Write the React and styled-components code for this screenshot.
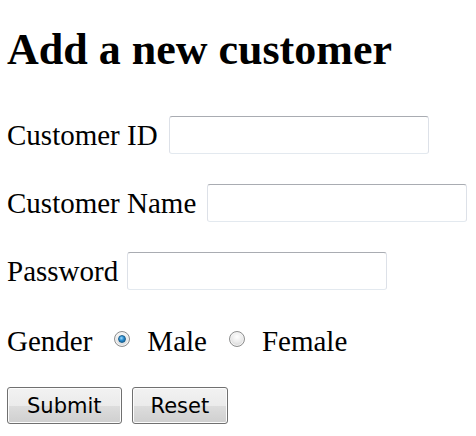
import styled, { createGlobalStyle } from "styled-components";

const GlobalStyle = createGlobalStyle`
    html, body {
        margin: 0;
        padding: 0;
        background: #ffffff;
    }
`;

const Page = styled.div`
    padding: 25px 7px 0 7px;
    font-family: "Liberation Serif", "Times New Roman", serif;
    color: #000000;
`;

const Title = styled.h2`
    margin: 0;
    font-size: 44px;
    line-height: 50px;
    font-weight: 700;
`;

const Form = styled.form`
    display: flex;
    flex-direction: column;
    gap: 30px;
    margin-top: 41px;
`;

const Row = styled.div`
    display: flex;
    align-items: center;
    height: 38px;
    margin-top: ${(p) => p.$shift ?? 0}px;
`;

const Label = styled.label`
    font-size: 29px;
    line-height: 38px;
    margin-right: ${(p) => p.$gap ?? 10}px;
    white-space: nowrap;
`;

const TextInput = styled.input`
    box-sizing: border-box;
    width: 260px;
    height: 38px;
    margin: 0;
    padding: 2px 4px;
    border: 1px solid;
    border-color: #a9acb2 #dde1e8 #e3e9ef #dde1e8;
    border-radius: 3px;
    background: #ffffff;
    font-size: 20px;
    outline: none;
`;

const RadioBox = styled.span`
    box-sizing: border-box;
    display: flex;
    align-items: center;
    justify-content: center;
    width: 16px;
    height: 16px;
    margin: -5px 17px 0 22px;
    border-radius: 50%;
    border: 1px solid #8e8f8f;
    background: radial-gradient(circle at 50% 35%, #ffffff 0%, #ececec 45%, #c9c9c9 100%);
    box-shadow: inset 0 0 0 1px #f4f4f4;
`;

const RadioDot = styled.span`
    width: 8px;
    height: 8px;
    border-radius: 50%;
    background: radial-gradient(circle at 40% 35%, #9fdcff 0%, #2a8ccf 45%, #0b5a8f 100%);
    border: 1px solid #1c5f8c;
    box-sizing: border-box;
`;

const Buttons = styled.div`
    display: flex;
    gap: 10px;
    margin-top: -3px;
`;

const Button = styled.button`
    box-sizing: border-box;
    height: 37px;
    margin: 0;
    padding: 0 ${(p) => p.$pad ?? 19}px;
    border: 1px solid #707070;
    border-radius: 3px;
    background: linear-gradient(
        to bottom,
        #f2f2f2 0%,
        #ebebeb 50%,
        #dddddd 51%,
        #cfcfcf 100%
    );
    box-shadow: inset 0 0 0 1px #fcfcfc;
    font-family: "DejaVu Sans", Verdana, sans-serif;
    font-size: 21px;
    color: #000000;
    cursor: pointer;
`;

const Radio = ({ checked }) => (
    <RadioBox>{checked && <RadioDot />}</RadioBox>
);

export default function App() {
    return (
        <>
            <GlobalStyle />
            <Page>
                <Title>Add a new customer</Title>
                <Form onSubmit={(e) => e.preventDefault()}>
                    <Row>
                        <Label $gap={11}>Customer ID</Label>
                        <TextInput type="text" />
                    </Row>
                    <Row>
                        <Label $gap={11}>Customer Name</Label>
                        <TextInput type="text" />
                    </Row>
                    <Row>
                        <Label $gap={9}>Password</Label>
                        <TextInput type="password" />
                    </Row>
                    <Row $shift={2}>
                        <Label $gap={0}>Gender</Label>
                        <Radio checked />
                        <Label $gap={0}>Male</Label>
                        <Radio />
                        <Label $gap={0}>Female</Label>
                    </Row>
                    <Buttons>
                        <Button type="submit" $pad={19}>Submit</Button>
                        <Button type="reset" $pad={18}>Reset</Button>
                    </Buttons>
                </Form>
            </Page>
        </>
    );
}
